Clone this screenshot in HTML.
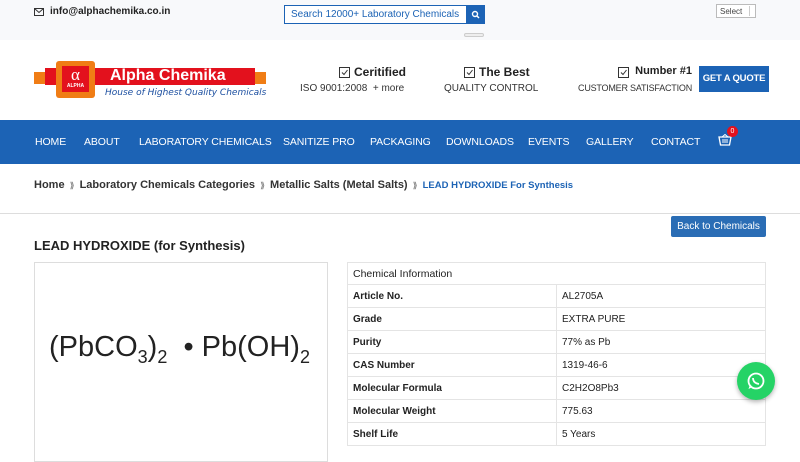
<!DOCTYPE html>
<html><head><style>
*{margin:0;padding:0;box-sizing:border-box}
body{width:800px;height:450px;overflow:hidden;font-family:"Liberation Sans",sans-serif;background:#fff;position:relative;color:#222}
.a{position:absolute}
.top{left:0;top:0;width:800px;height:40px;background:#f8f9fb}
.nav{left:0;top:120px;width:800px;height:44px;background:#1c63b5}
.nav span{position:absolute;top:16px;color:#fff;font-size:10.5px;letter-spacing:-0.1px}
table{border-collapse:collapse;font-size:10px}
td{border:1px solid #e4e4e4;height:23px;padding:0 5px;color:#222}
</style></head><body>
<div class="a top"></div>
<svg class="a" style="left:34px;top:8px" width="10" height="8"><rect x="0.5" y="0.5" width="9" height="7" fill="none" stroke="#333"/><path d="M0.5 0.5 L5 4.5 L9.5 0.5" fill="none" stroke="#333"/></svg>
<div class="a" style="left:50px;top:6px;font-size:10px;font-weight:bold;color:#222">info@alphachemika.co.in</div>
<div class="a" style="left:284px;top:5px;width:183px;height:19px;border:1px solid #1c63b5;background:#fff;font-size:10px;color:#1c63b5;padding:3px 6px;white-space:nowrap">Search 12000+ Laboratory Chemicals</div>
<div class="a" style="left:466px;top:5px;width:19px;height:19px;background:#1c63b5"><svg width="19" height="19"><circle cx="9" cy="9" r="2.5" fill="none" stroke="#fff" stroke-width="1.4"/><path d="M11 11 L13 13" stroke="#fff" stroke-width="1.5"/></svg></div>
<div class="a" style="left:464px;top:33px;width:20px;height:4px;border:1px solid #ccc;border-radius:3px;background:#eee"></div>
<div class="a" style="left:716px;top:4px;width:40px;height:14px;border:1px solid #bbb;background:#fff;font-size:8px;color:#444;padding:2px 3px">Select<span style="position:absolute;right:1px;top:1px;width:5px;height:10px;border-left:1px solid #ccc"></span></div>

<!-- logo -->
<div class="a" style="left:34px;top:72px;width:232px;height:12px;background:#f07d15"></div>
<div class="a" style="left:45px;top:68px;width:210px;height:17px;background:#e3111d"></div>
<div class="a" style="left:56px;top:61px;width:39px;height:37px;background:#f07d15;border-radius:3px"></div>
<div class="a" style="left:62px;top:66px;width:27px;height:26px;background:#e3111d;color:#fff;text-align:center;font-family:'Liberation Serif',serif;font-size:17px;line-height:18px">α<div style="font-size:5px;font-family:'Liberation Sans';font-weight:bold;line-height:5px">ALPHA</div></div>
<div class="a" style="left:110px;top:67px;color:#fff;font-weight:bold;font-size:16px;line-height:17px">Alpha Chemika</div>
<div class="a" style="left:105px;top:88px;color:#1c4fa0;font-style:italic;font-size:9px;font-family:'DejaVu Sans',sans-serif">House of Highest Quality Chemicals</div>

<!-- features -->
<svg class="a" style="left:339px;top:67px" width="11" height="11"><rect x="0.5" y="0.5" width="10" height="10" fill="none" stroke="#333"/><path d="M3 5.5 L5 7.5 L8.5 3" fill="none" stroke="#333"/></svg>
<div class="a" style="left:354px;top:65px;font-size:12px;font-weight:bold">Ceritified</div>
<div class="a" style="left:300px;top:83px;font-size:10px;color:#333">ISO 9001:2008 &nbsp;+ more</div>
<svg class="a" style="left:464px;top:67px" width="11" height="11"><rect x="0.5" y="0.5" width="10" height="10" fill="none" stroke="#333"/><path d="M3 5.5 L5 7.5 L8.5 3" fill="none" stroke="#333"/></svg>
<div class="a" style="left:479px;top:65px;font-size:12px;font-weight:bold">The Best</div>
<div class="a" style="left:444px;top:83px;font-size:10px;color:#333">QUALITY CONTROL</div>
<svg class="a" style="left:618px;top:67px" width="11" height="11"><rect x="0.5" y="0.5" width="10" height="10" fill="none" stroke="#333"/><path d="M3 5.5 L5 7.5 L8.5 3" fill="none" stroke="#333"/></svg>
<div class="a" style="right:108px;top:65px;font-size:11px;font-weight:bold">Number #1</div>
<div class="a" style="right:108px;top:83px;font-size:9px;color:#333;letter-spacing:-0.2px;white-space:nowrap">CUSTOMER SATISFACTION</div>
<div class="a" style="left:699px;top:66px;width:70px;height:26px;background:#1c63b5;color:#fff;font-weight:bold;font-size:9.5px;text-align:center;line-height:26px;letter-spacing:-0.2px;white-space:nowrap">GET A QUOTE</div>

<div class="a nav">
<span style="left:35px">HOME</span><span style="left:84px">ABOUT</span><span style="left:139px">LABORATORY CHEMICALS</span><span style="left:283px">SANITIZE PRO</span><span style="left:370px">PACKAGING</span><span style="left:446px">DOWNLOADS</span><span style="left:528px">EVENTS</span><span style="left:586px">GALLERY</span><span style="left:651px">CONTACT</span>
<svg style="position:absolute;left:718px;top:14px" width="14" height="12"><path d="M1 3 H13 L11.5 11 H2.5 Z" fill="none" stroke="#fff" stroke-width="1.3"/><path d="M4 3 L7 0.5 L10 3 M5 5v4 M7 5v4 M9 5v4" stroke="#fff" fill="none"/></svg>
<div style="position:absolute;left:727px;top:6px;width:11px;height:11px;border-radius:50%;background:#e3111d;color:#fff;font-size:7px;text-align:center;line-height:11px">0</div>
</div>

<div class="a" style="left:34px;top:179px;font-size:11px;font-weight:bold;color:#333">Home <span style="font-size:8px;color:#888">&nbsp;⟫&nbsp;</span> Laboratory Chemicals Categories <span style="font-size:8px;color:#888">&nbsp;⟫&nbsp;</span> Metallic Salts (Metal Salts) <span style="font-size:8px;color:#888">&nbsp;⟫&nbsp;</span> <span style="color:#1c63b5;font-size:9.5px">LEAD HYDROXIDE For Synthesis</span></div>
<div class="a" style="left:0;top:213px;width:800px;height:1px;background:#ddd"></div>
<div class="a" style="left:671px;top:216px;width:95px;height:21px;background:#2a6db5;border-radius:2px;color:#fff;font-size:10px;text-align:center;line-height:21px">Back to Chemicals</div>
<div class="a" style="left:34px;top:238px;font-size:13px;font-weight:bold;color:#222">LEAD HYDROXIDE (for Synthesis)</div>

<div class="a" style="left:34px;top:262px;width:294px;height:200px;border:1px solid #ddd"></div>
<div class="a" style="left:49px;top:331px;font-size:29px;color:#222;font-family:'Liberation Sans';white-space:nowrap">(PbCO<sub style="font-size:18px">3</sub>)<sub style="font-size:18px">2</sub>&nbsp;&nbsp;• Pb(OH)<sub style="font-size:18px">2</sub></div>

<table class="a" style="left:347px;top:262px;width:419px">
<tr><td colspan="2" style="height:22px;font-size:10.5px">Chemical Information</td></tr>
<tr><td style="width:209px;font-weight:bold">Article No.</td><td>AL2705A</td></tr>
<tr><td style="font-weight:bold">Grade</td><td>EXTRA PURE</td></tr>
<tr><td style="font-weight:bold">Purity</td><td>77% as Pb</td></tr>
<tr><td style="font-weight:bold">CAS Number</td><td>1319-46-6</td></tr>
<tr><td style="font-weight:bold">Molecular Formula</td><td>C2H2O8Pb3</td></tr>
<tr><td style="font-weight:bold">Molecular Weight</td><td>775.63</td></tr>
<tr><td style="font-weight:bold">Shelf Life</td><td>5 Years</td></tr>
</table>

<div class="a" style="left:737px;top:362px;width:38px;height:38px;border-radius:50%;background:#25d366;box-shadow:0 2px 5px rgba(0,0,0,.3)">
<svg width="38" height="38"><circle cx="19" cy="19" r="7.5" fill="none" stroke="#fff" stroke-width="1.8"/><path d="M11.5 27 L13 22.5 L15.5 25 Z" fill="#fff"/><path d="M16 16 q0 5 6 6" stroke="#fff" stroke-width="1.8" fill="none"/></svg></div>
</body></html>
